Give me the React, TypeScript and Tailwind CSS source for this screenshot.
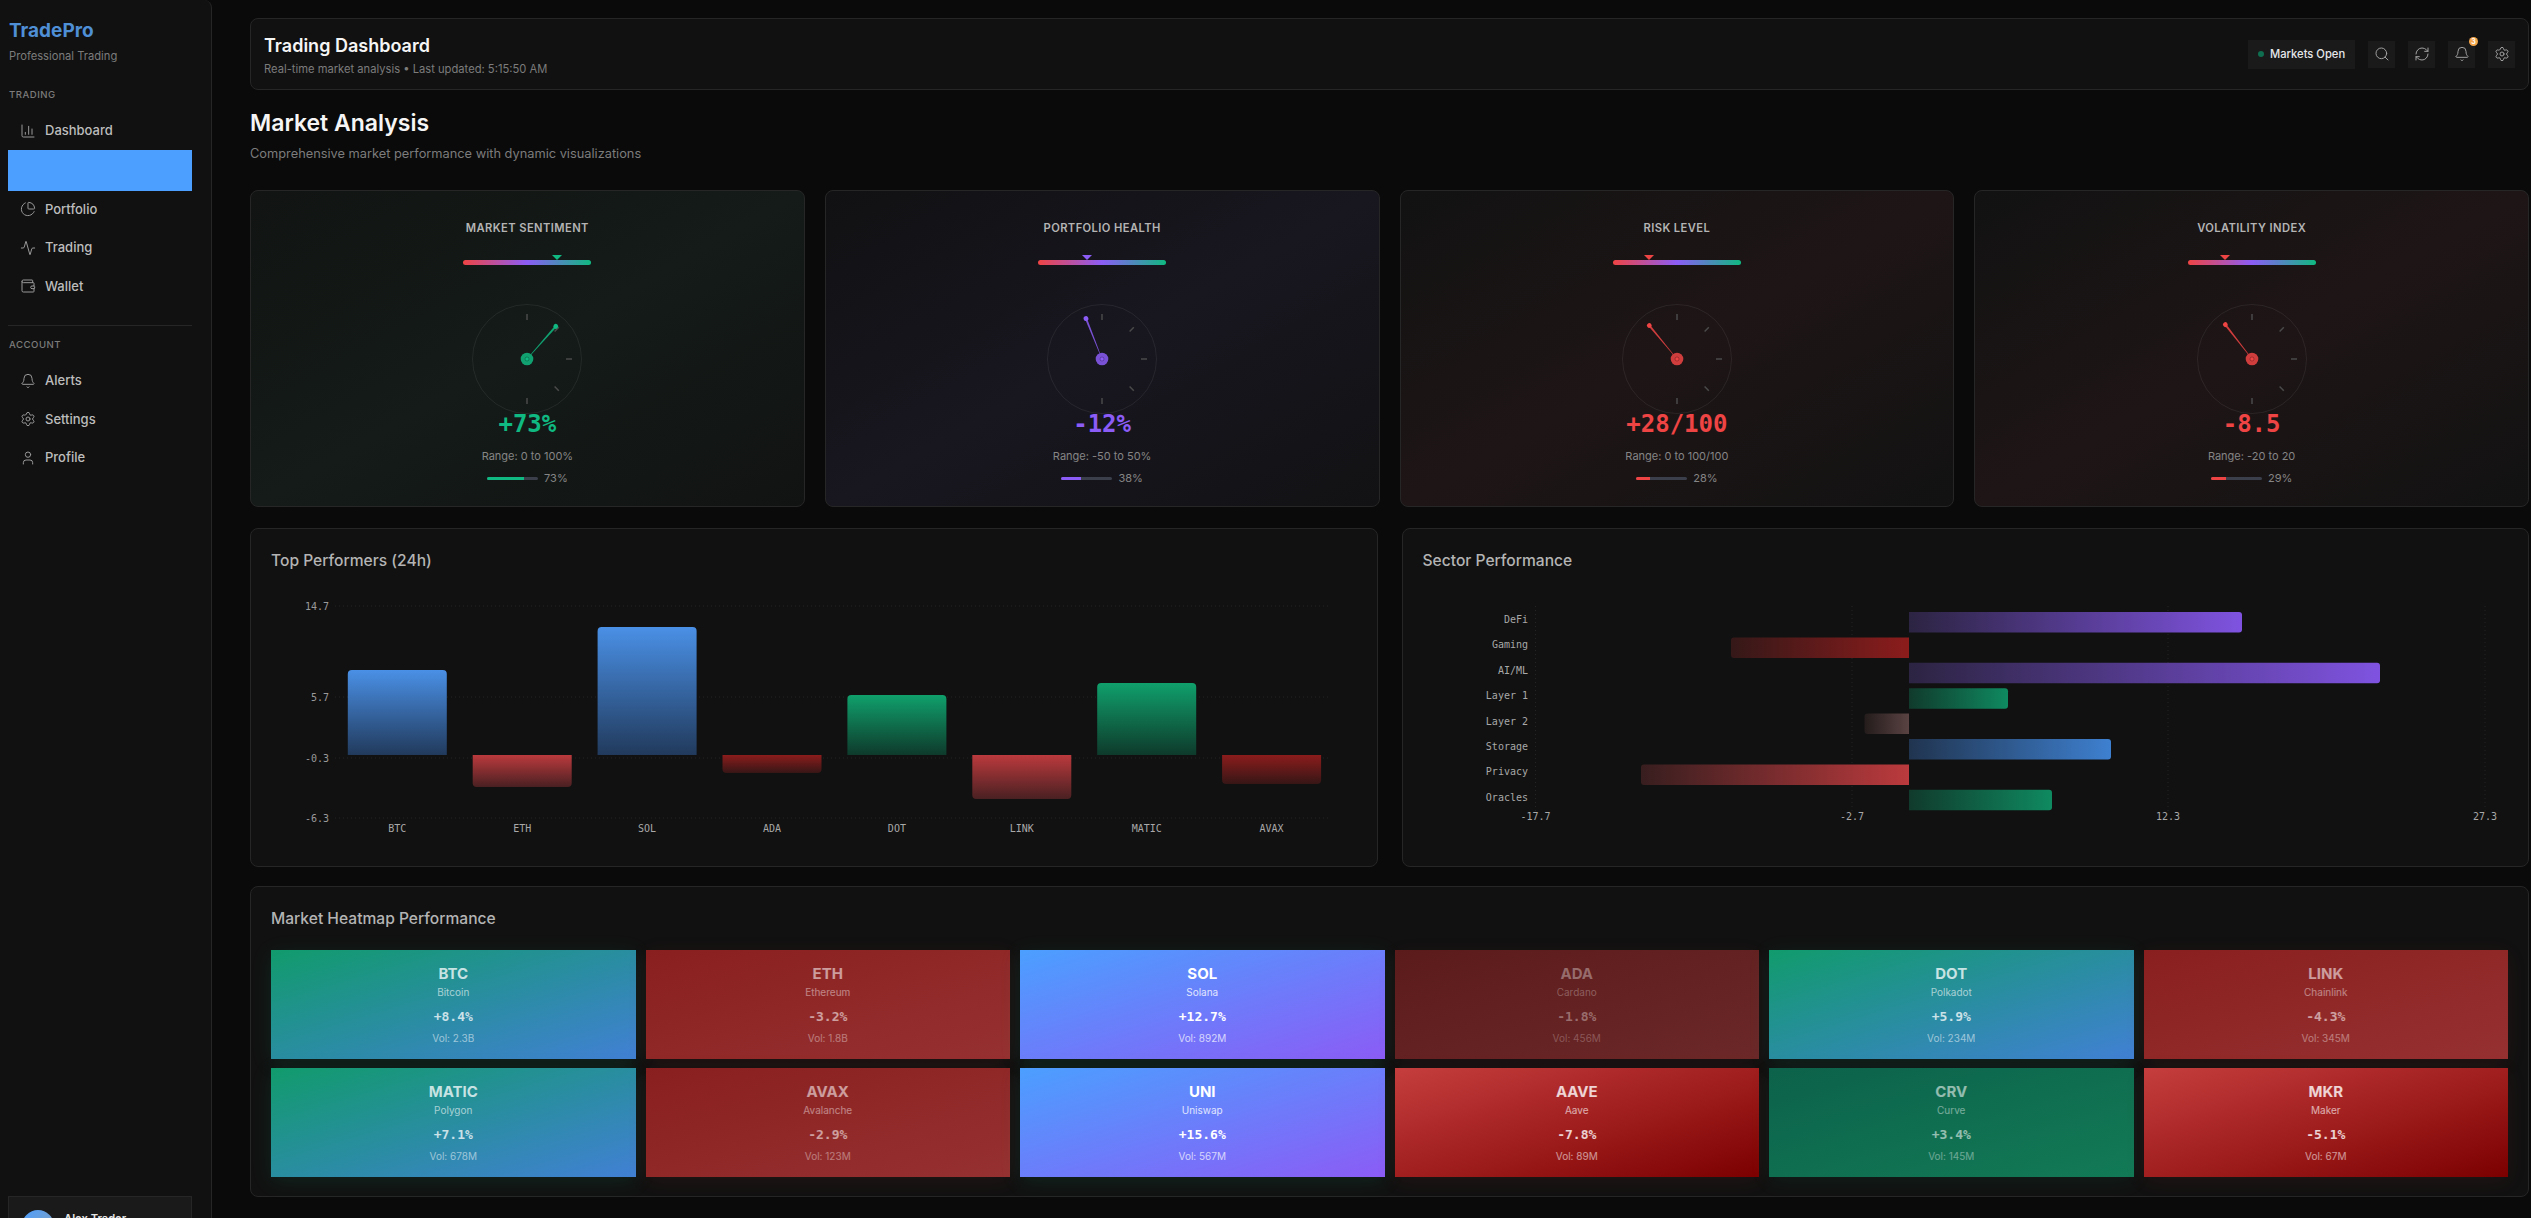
import { Activity, BarChart3, Bell, PieChart, RefreshCw, Search, Settings, User, Wallet } from "lucide-react"

const tradingNav = [
  { label: "Portfolio", icon: PieChart },
  { label: "Trading", icon: Activity },
  { label: "Wallet", icon: Wallet },
]

const accountNav = [
  { label: "Alerts", icon: Bell },
  { label: "Settings", icon: Settings },
  { label: "Profile", icon: User },
]

const gauges = [
  { title: "MARKET SENTIMENT", value: "+73%", range: "Range: 0 to 100%", pct: 73, color: "#10b981", text: "text-[#10b981]", card: "bg-[linear-gradient(to_bottom_right,#111412_0%,#141b18_50%,#111312_100%)]" },
  { title: "PORTFOLIO HEALTH", value: "-12%", range: "Range: -50 to 50%", pct: 38, color: "#8b5cf6", text: "text-[#8b5cf6]", card: "bg-[linear-gradient(to_bottom_right,#111113_0%,#18161f_50%,#121214_100%)]" },
  { title: "RISK LEVEL", value: "+28/100", range: "Range: 0 to 100/100", pct: 28, color: "#ef4444", text: "text-[#ef4444]", card: "bg-[linear-gradient(to_bottom_right,#121212_0%,#1e1516_50%,#121212_100%)]" },
  { title: "VOLATILITY INDEX", value: "-8.5", range: "Range: -20 to 20", pct: 29, color: "#ef4444", text: "text-[#ef4444]", card: "bg-[linear-gradient(to_bottom_right,#121212_0%,#1e1516_50%,#121212_100%)]" },
]

const bars = [
  { name: "BTC", h: 85, fill: "blue" },
  { name: "ETH", h: -32, fill: "red" },
  { name: "SOL", h: 128, fill: "blue" },
  { name: "ADA", h: -18, fill: "dark" },
  { name: "DOT", h: 60, fill: "green" },
  { name: "LINK", h: -44, fill: "red" },
  { name: "MATIC", h: 72, fill: "green" },
  { name: "AVAX", h: -29, fill: "dark" },
]

const sectors = [
  { name: "DeFi", end: 2242, fill: "purple" },
  { name: "Gaming", end: 1731, fill: "dark" },
  { name: "AI/ML", end: 2380, fill: "purple" },
  { name: "Layer 1", end: 2008, fill: "green" },
  { name: "Layer 2", end: 1864.5, fill: "dim" },
  { name: "Storage", end: 2111, fill: "blue" },
  { name: "Privacy", end: 1641, fill: "red" },
  { name: "Oracles", end: 2052, fill: "green" },
]

const tiles = [
  { sym: "BTC", name: "Bitcoin", chg: "+8.4%", vol: "Vol: 2.3B", bg: "bg-[linear-gradient(to_bottom_right,#119b6c,#4180d4)] shadow-[0_4px_20px_rgba(16,185,129,0.12)]", fg: "text-white/75" },
  { sym: "ETH", name: "Ethereum", chg: "-3.2%", vol: "Vol: 1.8B", bg: "bg-[linear-gradient(to_bottom_right,#8a1f1f,#963131)] shadow-[0_4px_20px_rgba(239,68,68,0.08)]", fg: "text-white/55" },
  { sym: "SOL", name: "Solana", chg: "+12.7%", vol: "Vol: 892M", bg: "bg-[linear-gradient(to_bottom_right,#4b9fff,#8b5cf6)] shadow-[0_4px_20px_rgba(16,185,129,0.12)]", fg: "text-white" },
  { sym: "ADA", name: "Cardano", chg: "-1.8%", vol: "Vol: 456M", bg: "bg-[linear-gradient(to_bottom_right,#5c1b1b,#6c2828)] shadow-[0_4px_20px_rgba(239,68,68,0.06)]", fg: "text-white/35" },
  { sym: "DOT", name: "Polkadot", chg: "+5.9%", vol: "Vol: 234M", bg: "bg-[linear-gradient(to_bottom_right,#119b6c,#4180d4)] shadow-[0_4px_20px_rgba(16,185,129,0.12)]", fg: "text-white/75" },
  { sym: "LINK", name: "Chainlink", chg: "-4.3%", vol: "Vol: 345M", bg: "bg-[linear-gradient(to_bottom_right,#8a1f1f,#963131)] shadow-[0_4px_20px_rgba(239,68,68,0.08)]", fg: "text-white/55" },
  { sym: "MATIC", name: "Polygon", chg: "+7.1%", vol: "Vol: 678M", bg: "bg-[linear-gradient(to_bottom_right,#119b6c,#4180d4)] shadow-[0_4px_20px_rgba(16,185,129,0.12)]", fg: "text-white/75" },
  { sym: "AVAX", name: "Avalanche", chg: "-2.9%", vol: "Vol: 123M", bg: "bg-[linear-gradient(to_bottom_right,#8a1f1f,#963131)] shadow-[0_4px_20px_rgba(239,68,68,0.08)]", fg: "text-white/55" },
  { sym: "UNI", name: "Uniswap", chg: "+15.6%", vol: "Vol: 567M", bg: "bg-[linear-gradient(to_bottom_right,#4b9fff,#8b5cf6)] shadow-[0_4px_20px_rgba(16,185,129,0.12)]", fg: "text-white" },
  { sym: "AAVE", name: "Aave", chg: "-7.8%", vol: "Vol: 89M", bg: "bg-[linear-gradient(to_bottom_right,#c63e3e,#7c0000)] shadow-[0_4px_20px_rgba(239,68,68,0.08)]", fg: "text-white/80" },
  { sym: "CRV", name: "Curve", chg: "+3.4%", vol: "Vol: 145M", bg: "bg-[linear-gradient(to_bottom_right,#0c624a,#127a56)] shadow-[0_4px_20px_rgba(16,185,129,0.08)]", fg: "text-white/55" },
  { sym: "MKR", name: "Maker", chg: "-5.1%", vol: "Vol: 67M", bg: "bg-[linear-gradient(to_bottom_right,#c63e3e,#7c0000)] shadow-[0_4px_20px_rgba(239,68,68,0.08)]", fg: "text-white/80" },
]

const monoFont = "'DejaVu Sans Mono', monospace"

function NavRow({ label, icon: Icon }: { label: string; icon: typeof Bell }) {
  return (
    <div className="flex h-[38.5px] items-center gap-[9px] pl-3 text-[13px] font-medium text-[#bdbdbd]">
      <Icon size={16} strokeWidth={1.5} className="text-[#999]" />
      {label}
    </div>
  )
}

// dial with 5 ticks on the right half, needle angle comes from the pct
function Dial({ pct, color }: { pct: number; color: string }) {
  const angle = (pct / 100) * 180 - 90
  return (
    <svg width="110" height="110" viewBox="-55 -55 110 110" className="block">
      <circle r="54.5" fill="none" stroke="#ffffff" strokeOpacity="0.07" />
      {[0, 45, 90, 135, 180].map((a) => (
        <line key={a} x1="0" y1="-39" x2="0" y2="-45" stroke="#4a4a4a" strokeWidth="1.5" transform={`rotate(${a})`} />
      ))}
      <g transform={`rotate(${angle})`}>
        <polygon points="-0.3,-6 0.3,-6 1,-42 -1,-42" fill={color} fillOpacity="0.85" />
        <circle cx="0" cy="-43.5" r="2.4" fill={color} />
      </g>
      <circle r="6.3" fill={color} fillOpacity="0.85" />
      <circle r="2" fill={color} stroke="#000" strokeOpacity="0.25" strokeWidth="1" />
    </svg>
  )
}

function GaugeCard({ title, value, range, pct, color, text, card }: (typeof gauges)[number]) {
  return (
    <div className={`flex h-[317px] flex-col items-center rounded-lg border border-[#262626] pt-[28px] ${card}`}>
      <div className="text-[11.2px] leading-[18px] font-semibold tracking-[0.4px] text-[#b4b4b4]">{title}</div>
      <div className="relative mt-[23px] h-[5px] w-[128px] rounded-full bg-[linear-gradient(90deg,#ef4444,#8b5cf6_50%,#10b981)]">
        <div
          className="absolute -top-[5px] h-0 w-0 -translate-x-1/2 border-x-[5px] border-t-[5px] border-x-transparent"
          style={{ left: `${pct}%`, borderTopColor: color }}
        />
      </div>
      <div className="mt-[39px]">
        <Dial pct={pct} color={color} />
      </div>
      <div className={`-mt-[4px] text-[24px] leading-[28px] font-bold ${text}`} style={{ fontFamily: monoFont }}>
        {value}
      </div>
      <div className="mt-[10px] text-[11px] leading-[16px] text-[#858585]">{range}</div>
      <div className="mt-[6px] flex items-center gap-[6px]">
        <div className="h-[3px] w-[51px] overflow-hidden rounded-full bg-[#3a3f4b]">
          <div className="h-full" style={{ width: `${pct}%`, backgroundColor: color }} />
        </div>
        <span className="text-[11px] leading-[16px] text-[#858585]">{pct}%</span>
      </div>
    </div>
  )
}

function PerformersChart() {
  const zero = 165
  return (
    <svg width="1086" height="250" viewBox="0 0 1086 250" className="block" style={{ fontFamily: monoFont }}>
      <defs>
        <linearGradient id="pblue" x1="0" y1="0" x2="0" y2="1"><stop offset="0" stopColor="#4a90e6" /><stop offset="1" stopColor="#213a5c" /></linearGradient>
        <linearGradient id="pgreen" x1="0" y1="0" x2="0" y2="1"><stop offset="0" stopColor="#10a06c" /><stop offset="1" stopColor="#0e3a2b" /></linearGradient>
        <linearGradient id="pred" x1="0" y1="0" x2="0" y2="1"><stop offset="0" stopColor="#bb3a3d" /><stop offset="1" stopColor="#4a2022" /></linearGradient>
        <linearGradient id="pdark" x1="0" y1="0" x2="0" y2="1"><stop offset="0" stopColor="#8c1c1c" /><stop offset="1" stopColor="#371616" /></linearGradient>
      </defs>
      {[
        { v: "14.7", y: 16 },
        { v: "5.7", y: 107 },
        { v: "-0.3", y: 168 },
        { v: "-6.3", y: 228 },
      ].map((t) => (
        <g key={t.v}>
          <line x1="64" x2="1060" y1={t.y} y2={t.y} stroke="#242424" strokeDasharray="1 3" />
          <text x="58" y={t.y + 3.5} fontSize="10" textAnchor="end" fill="#9a9a9a">{t.v}</text>
        </g>
      ))}
      {bars.map((b, i) => {
        const x = 76.8 + i * 124.9
        const h = Math.abs(b.h)
        const up = b.h > 0
        const path = up
          ? `M${x} ${zero}V${zero - h + 4}q0 -4 4 -4H${x + 95}q4 0 4 4V${zero}Z`
          : `M${x} ${zero}V${zero + h - 4}q0 4 4 4H${x + 95}q4 0 4 -4V${zero}Z`
        return (
          <g key={b.name}>
            <path d={path} fill={`url(#p${b.fill})`} />
            <text x={x + 49.5} y="242" fontSize="10" textAnchor="middle" fill="#a8a8a8">{b.name}</text>
          </g>
        )
      })}
    </svg>
  )
}

function SectorChart() {
  const left = 1423
  const zero = 1909 - left
  return (
    <svg width="1086" height="250" viewBox="0 0 1086 250" className="block" style={{ fontFamily: monoFont }}>
      <defs>
        <linearGradient id="spurple" x1="0" y1="0" x2="1" y2="0"><stop offset="0" stopColor="#2c2442" /><stop offset="1" stopColor="#7f53e0" /></linearGradient>
        <linearGradient id="sgreen" x1="0" y1="0" x2="1" y2="0"><stop offset="0" stopColor="#103a2c" /><stop offset="1" stopColor="#0f8a60" /></linearGradient>
        <linearGradient id="sblue" x1="0" y1="0" x2="1" y2="0"><stop offset="0" stopColor="#20344f" /><stop offset="1" stopColor="#3e80d0" /></linearGradient>
        <linearGradient id="sred" x1="0" y1="0" x2="1" y2="0"><stop offset="0" stopColor="#381e1f" /><stop offset="1" stopColor="#bb3a3d" /></linearGradient>
        <linearGradient id="sdark" x1="0" y1="0" x2="1" y2="0"><stop offset="0" stopColor="#351818" /><stop offset="1" stopColor="#8c1c1c" /></linearGradient>
        <linearGradient id="sdim" x1="0" y1="0" x2="1" y2="0"><stop offset="0" stopColor="#241c1c" /><stop offset="1" stopColor="#5a4242" /></linearGradient>
      </defs>
      {[1535.5, 1852, 2168, 2485].map((x) => (
        <line key={x} x1={x - left} x2={x - left} y1="16" y2="222" stroke="#242424" strokeDasharray="1 3" />
      ))}
      {sectors.map((s, i) => {
        const y = 22 + i * 25.4
        const x = s.end - left
        const pos = x > zero
        const path = pos
          ? `M${zero} ${y}H${x - 3}q3 0 3 3V${y + 17.5}q0 3 -3 3H${zero}Z`
          : `M${zero} ${y}H${x + 3}q-3 0 -3 3V${y + 17.5}q0 3 3 3H${zero}Z`
        return (
          <g key={s.name}>
            <path d={path} fill={`url(#s${s.fill})`} />
            <text x={1528 - left} y={y + 11} fontSize="10" textAnchor="end" fill="#a8a8a8">{s.name}</text>
          </g>
        )
      })}
      {[
        { v: "-17.7", x: 1535.5 },
        { v: "-2.7", x: 1852 },
        { v: "12.3", x: 2168 },
        { v: "27.3", x: 2485 },
      ].map((t) => (
        <text key={t.v} x={t.x - left} y="230" fontSize="10" textAnchor="middle" fill="#a8a8a8">{t.v}</text>
      ))}
    </svg>
  )
}

export default function App() {
  return (
    <div className="flex h-[1218px] w-[2531px] overflow-hidden bg-[#0a0a0a]" style={{ fontFamily: "Inter, sans-serif" }}>
      {/* Sidebar */}
      <aside className="relative flex h-full w-[212px] shrink-0 flex-col overflow-hidden rounded-tr-lg border-r border-[#262626] bg-[#111111] px-2">
        <div className="mt-[17px] pl-px text-[19px] leading-[28px] font-bold text-[#4f8fd6]">TradePro</div>
        <div className="mt-[3px] pl-px text-[11.2px] leading-[16px] text-[#7c7c7c]">Professional Trading</div>
        <div className="mt-[24px] pl-px text-[9.6px] leading-[14px] font-medium tracking-[0.5px] text-[#7c7c7c]">TRADING</div>
        <div className="mt-[10px] w-[184px]">
          <div className="flex h-[38px] items-center gap-[9px] pl-3 text-[13px] font-medium text-[#bdbdbd]">
            <BarChart3 size={16} strokeWidth={1.5} className="text-[#999]" />
            Dashboard
          </div>
          <div className="-mb-px h-[41px] bg-[#4d9fff]" />
          {tradingNav.map((item) => (
            <NavRow key={item.label} {...item} />
          ))}
        </div>
        <div className="mt-[19px] h-px w-[184px] bg-[#262626]" />
        <div className="mt-[12px] pl-px text-[9.6px] leading-[14px] font-medium tracking-[0.5px] text-[#7c7c7c]">ACCOUNT</div>
        <div className="mt-[10px] w-[184px]">
          {accountNav.map((item) => (
            <NavRow key={item.label} {...item} />
          ))}
        </div>
        <div className="absolute top-[1196px] left-2 flex h-[60px] w-[184px] gap-[10px] border border-[#262626] bg-[#1a1a1a] px-[13px] pt-[13px]">
          <div className="h-8 w-8 shrink-0 rounded-full bg-[linear-gradient(135deg,#4d9fff,#8b9fb0)]" />
          <div className="mt-px text-[11.2px] leading-[16px] font-semibold text-[#e5e5e5]">Alex Trader</div>
        </div>
      </aside>

      {/* Main */}
      <main className="ml-[38px] flex w-[2279px] shrink-0 flex-col pt-[18px]">
        <header className="flex h-[72px] items-center justify-between rounded-lg border border-[#262626] bg-[#111111] pr-[13px] pl-[13px]">
          <div className="pt-[2px]">
            <h1 className="text-[18px] leading-[26px] font-semibold text-[#f5f5f5]">Trading Dashboard</h1>
            <p className="mt-[2px] text-[11.2px] leading-[16px] text-[#7c7c7c]">Real-time market analysis • Last updated: 5:15:50 AM</p>
          </div>
          <div className="flex items-center gap-[13px]">
            <div className="flex h-[29px] w-[107px] items-center gap-[6px] bg-[#1a1a1a] pl-[10px] text-[11.2px] font-medium text-[#e5e7eb]">
              <span className="h-[6px] w-[6px] rounded-full bg-[#0f6e50]" />
              Markets Open
            </div>
            <button className="flex h-[27px] w-[27px] items-center justify-center bg-[#1a1a1a] text-[#a0a0a0]"><Search size={16} strokeWidth={1.5} /></button>
            <button className="flex h-[27px] w-[27px] items-center justify-center bg-[#1a1a1a] text-[#a0a0a0]"><RefreshCw size={16} strokeWidth={1.5} /></button>
            <button className="relative flex h-[27px] w-[27px] items-center justify-center bg-[#1a1a1a] text-[#a0a0a0]">
              <Bell size={16} strokeWidth={1.5} />
              <span className="absolute -top-[4px] -right-[3px] flex h-[9px] w-[9px] items-center justify-center rounded-full bg-[#f5a64a] text-[7px] leading-none font-bold text-white">3</span>
            </button>
            <button className="flex h-[27px] w-[27px] items-center justify-center bg-[#1a1a1a] text-[#a0a0a0]"><Settings size={16} strokeWidth={1.5} /></button>
          </div>
        </header>

        <h2 className="mt-[17px] text-[23px] leading-[32px] font-semibold text-[#f5f5f5]">Market Analysis</h2>
        <p className="mt-[5px] text-[12.8px] leading-[20px] text-[#7c7c7c]">Comprehensive market performance with dynamic visualizations</p>

        <section className="mt-[26px] grid grid-cols-4 gap-5">
          {gauges.map((g) => (
            <GaugeCard key={g.title} {...g} />
          ))}
        </section>

        <section className="mt-[21px] grid grid-cols-2 gap-6">
          <div className="h-[339px] rounded-lg border border-[#262626] bg-[#111111] px-5 pt-5">
            <h3 className="text-[15.6px] leading-[24px] font-medium text-[#b4b4b4]">Top Performers (24h)</h3>
            <div className="mt-[17px]"><PerformersChart /></div>
          </div>
          <div className="h-[339px] rounded-lg border border-[#262626] bg-[#111111] px-5 pt-5">
            <h3 className="text-[15.6px] leading-[24px] font-medium text-[#b4b4b4]">Sector Performance</h3>
            <div className="mt-[17px]"><SectorChart /></div>
          </div>
        </section>

        <section className="mt-[19px] h-[311px] rounded-lg border border-[#262626] bg-[#111111] px-5 pt-5">
          <h3 className="text-[15.6px] leading-[24px] font-medium text-[#b4b4b4]">Market Heatmap Performance</h3>
          <div className="mt-[19px] grid grid-cols-6 gap-x-[10px] gap-y-[9px]">
            {tiles.map((t) => (
              <div key={t.sym} className={`flex h-[109px] flex-col items-center pt-[14px] ${t.bg} ${t.fg}`}>
                <div className="text-[15px] leading-[20px] font-bold">{t.sym}</div>
                <div className="text-[10px] leading-[16px] opacity-80">{t.name}</div>
                <div className="mt-[7px] text-[13px] leading-[20px] font-bold" style={{ fontFamily: monoFont }}>{t.chg}</div>
                <div className="mt-[3px] text-[10px] leading-[16px] opacity-70">{t.vol}</div>
              </div>
            ))}
          </div>
        </section>
      </main>
    </div>
  )
}
